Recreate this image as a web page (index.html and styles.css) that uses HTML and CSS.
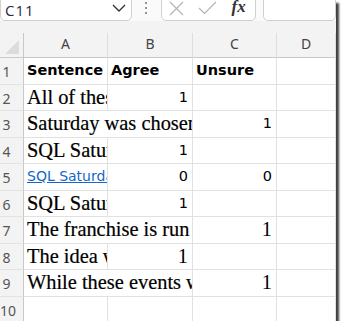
FILE: index.html
```html
<!doctype html>
<html lang="en-US">
  <head>
    <meta charset="utf-8" />
    <title>Sheet</title>
    <link rel="stylesheet" href="styles.css">
  </head>
  <body>
<div class="shot">

<div class="fbar">
  <div class="namebox">
    <span class="ref">C11</span>
    <svg class="chev" width="14" height="8" viewBox="0 0 14 8"><path d="M1 1 L7 7 L13 1" fill="none" stroke="#333" stroke-width="1.4"/></svg>
  </div>
  <div class="dots"><i></i><i></i><i></i></div>
  <div class="fbtns">
    <svg class="xicon" width="15" height="15" viewBox="0 0 15 15"><path d="M1 1 L14 14 M14 1 L1 14" fill="none" stroke="#b4b4b4" stroke-width="1.2"/></svg>
    <svg class="check" width="19" height="14" viewBox="0 0 19 14"><path d="M1 7 L6.5 12.5 L18 1" fill="none" stroke="#b4b4b4" stroke-width="1.2"/></svg>
    <span class="fx">fx</span>
  </div>
  <div class="finput"></div>
</div>

<div class="sheet">
  <div class="corner"><svg width="14" height="14" viewBox="0 0 14 14"><path d="M0 14 L14 14 L14 0 Z" fill="#dcdcdc"/></svg></div>
  <div class="colh">A</div>
  <div class="colh">B</div>
  <div class="colh">C</div>
  <div class="colh">D</div>

  <div class="rowh">1</div>
  <div class="cell bold">Sentence</div>
  <div class="cell bold">Agree</div>
  <div class="cell bold">Unsure</div>
  <div class="cell"></div>

  <div class="rowh">2</div>
  <div class="cell serif">All of these events</div>
  <div class="cell num">1</div>
  <div class="cell"></div>
  <div class="cell"></div>

  <div class="rowh">3</div>
  <div class="cell serif span2">Saturday was chosen because</div>
  <div class="cell num">1</div>
  <div class="cell"></div>

  <div class="rowh">4</div>
  <div class="cell serif">SQL Saturday is</div>
  <div class="cell num">1</div>
  <div class="cell"></div>
  <div class="cell"></div>

  <div class="rowh">5</div>
  <div class="cell link">SQL Saturday site</div>
  <div class="cell num">0</div>
  <div class="cell num">0</div>
  <div class="cell"></div>

  <div class="rowh">6</div>
  <div class="cell serif">SQL Saturday has</div>
  <div class="cell num">1</div>
  <div class="cell"></div>
  <div class="cell"></div>

  <div class="rowh">7</div>
  <div class="cell serif span2">The franchise is run with volunteers</div>
  <div class="cell num snum">1</div>
  <div class="cell"></div>

  <div class="rowh">8</div>
  <div class="cell serif">The idea was</div>
  <div class="cell num snum">1</div>
  <div class="cell"></div>
  <div class="cell"></div>

  <div class="rowh">9</div>
  <div class="cell serif span2">While these events were free</div>
  <div class="cell num snum">1</div>
  <div class="cell"></div>

  <div class="rowh">10</div>
  <div class="cell"></div>
  <div class="cell"></div>
  <div class="cell"></div>
  <div class="cell"></div>
</div>

</div>
  </body>
</html>
```

FILE: styles.css
```css
body {
  margin: 0;
  background-color: #ffffff;
}

.shot {
  width: 336px;
  height: 321px;
  overflow: hidden;
  background-color: #f3f3f3;
  box-shadow: 3px 3px 2px rgba(0, 0, 0, 0.75);
}

/* formula bar */

.fbar {
  display: flex;
  height: 21px;
  overflow: hidden;
  background-color: #fafafa;
}

.namebox, .fbtns, .finput {
  box-sizing: border-box;
  height: 26px;
  margin-top: -5px;
  border: 1px solid #d0d0d0;
  border-radius: 5px;
  background-color: #ffffff;
}

.namebox {
  width: 133px;
  display: flex;
  align-items: center;
  padding-left: 4px;
  padding-top: 3px;
}

.ref {
  font-family: "Open Sans", sans-serif;
  font-size: 15px;
  letter-spacing: 1px;
  color: #1f2a44;
  flex: 1;
}

.chev {
  margin-right: 5px;
  margin-top: -3px;
}

.dots {
  width: 29px;
  display: flex;
  flex-direction: column;
  align-items: center;
  gap: 3px;
  padding-top: 2px;
}

.dots i {
  width: 2px;
  height: 2px;
  border-radius: 1px;
  background-color: #707070;
}

.fbtns {
  width: 96px;
  display: flex;
  align-items: center;
  padding-left: 7px;
  padding-top: 3px;
}

.xicon {
  margin-top: -2px;
}

.check {
  margin-left: 14px;
  margin-top: -3px;
}

.fx {
  margin-left: 15px;
  margin-top: -5px;
  font-family: "Liberation Serif", serif;
  font-style: italic;
  font-size: 17px;
  font-weight: bold;
  color: #333333;
}

.finput {
  width: 74px;
  margin-left: 7px;
}

/* grid */

.sheet {
  display: grid;
  grid-template-columns: 24px 84px 85px 84px 1fr;
  grid-template-rows: 25px;
  grid-auto-rows: 26.55px;
  margin-top: 12px;
}

.corner {
  box-sizing: border-box;
  border-right: 1px solid #c8c8c8;
  border-bottom: 1px solid #c8c8c8;
  display: flex;
  align-items: flex-end;
  justify-content: flex-end;
  padding: 0 4px 3px 0;
}

.colh {
  box-sizing: border-box;
  border-right: 1px solid #dedede;
  border-bottom: 1px solid #c8c8c8;
  font-family: "Noto Sans", sans-serif;
  font-size: 14px;
  color: #444444;
  text-align: center;
  line-height: 21px;
}

.rowh {
  box-sizing: border-box;
  border-right: 1px solid #c8c8c8;
  border-bottom: 1px solid #e2e2e2;
  font-family: "Noto Sans", sans-serif;
  font-size: 14px;
  color: #555555;
  text-align: center;
  padding-right: 10px;
  line-height: 27px;
}

.cell {
  box-sizing: border-box;
  background-color: #ffffff;
  border-right: 1px solid #e1e1e1;
  border-bottom: 1px solid #e1e1e1;
  overflow: hidden;
  white-space: nowrap;
  padding: 0 4px 0 3px;
  line-height: 25px;
  color: #000000;
}

.bold {
  font-family: "DejaVu Sans", sans-serif;
  font-weight: bold;
  font-size: 14.5px;
  line-height: 25px;
}

.serif {
  font-family: "Liberation Serif", serif;
  font-size: 20.4px;
  -webkit-text-stroke: 0.2px #000;
}

.span2 {
  grid-column: span 2;
}

.num {
  font-family: "DejaVu Sans", sans-serif;
  font-size: 14.5px;
  text-align: right;
  line-height: 25px;
}

.snum {
  font-family: "Liberation Serif", serif;
  font-size: 20.4px;
  line-height: 25px;
}

.link {
  font-family: "DejaVu Sans", sans-serif;
  font-size: 14px;
  line-height: 25px;
  color: #1467c9;
  text-decoration: underline;
}
```
